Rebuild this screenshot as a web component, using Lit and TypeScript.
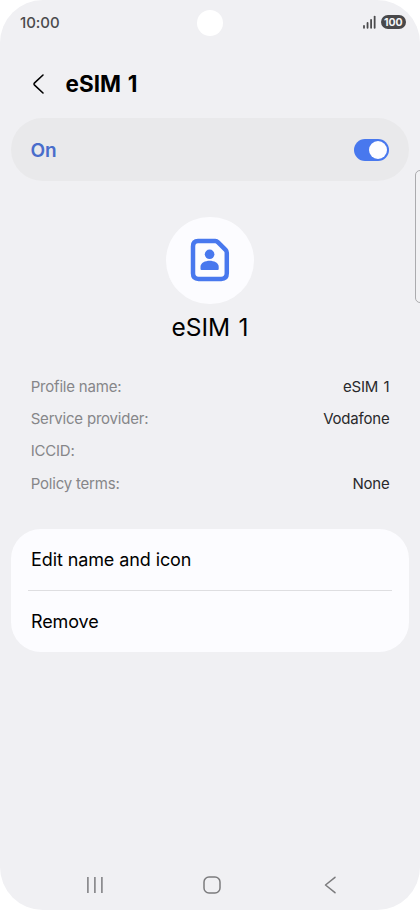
import { LitElement, html, css, svg } from "lit";
import { customElement } from "lit/decorators.js";

interface Detail {
  label: string;
  value: string;
}

const details: Detail[] = [
  { label: "Profile name:", value: "eSIM 1" },
  { label: "Service provider:", value: "Vodafone" },
  { label: "ICCID:", value: "" },
  { label: "Policy terms:", value: "None" },
];

const bars = [3.2, 6.2, 9.4, 12.6];

@customElement("app-root")
export class AppRoot extends LitElement {
  static styles = css`
    :host {
      display: block;
      width: 420px;
      height: 910px;
      background: #fff;
      font-family: Inter, Roboto, sans-serif;
      color: #000;
    }
    * { box-sizing: border-box; }
    svg { display: block; flex: none; }
    .screen {
      position: relative;
      width: 420px;
      height: 910px;
      border-radius: 43px;
      background: #f0f0f3;
      overflow: hidden;
      display: flex;
      flex-direction: column;
      white-space: nowrap;
    }
    .status {
      height: 44px;
      padding: 0 14.5px 0 20px;
      display: flex;
      align-items: center;
      justify-content: space-between;
    }
    .time { font-size: 15px; font-weight: 500; color: #4b4b4d; letter-spacing: -0.05px; }
    .indicators { display: flex; align-items: center; gap: 5px; }
    .battery {
      width: 24.5px;
      height: 14.4px;
      border-radius: 7.2px;
      background: #48484a;
      color: #f4f4f6;
      font-size: 10.5px;
      font-weight: 700;
      line-height: 15.4px;
      text-align: center;
    }
    .camera {
      position: absolute;
      left: 196.5px;
      top: 9.5px;
      width: 26.5px;
      height: 26.5px;
      border-radius: 50%;
      background: #fff;
    }
    .header { height: 74px; padding: 5px 0 0 32px; display: flex; align-items: center; gap: 20.5px; }
    .title { margin: 0; font-size: 22.5px; font-weight: 700; line-height: 30px; word-spacing: 1.5px; }
    .power {
      height: 63.4px;
      margin: 0 11px;
      padding: 0 19.8px 0 19.5px;
      border-radius: 31.7px;
      background: #e9e9eb;
      display: flex;
      align-items: center;
      justify-content: space-between;
    }
    .state { padding-top: 2px; font-size: 19px; font-weight: 580; color: #496dcb; }
    .switch {
      width: 35.2px;
      height: 22.2px;
      padding: 0 2px;
      border-radius: 12px;
      background: #4878ee;
      display: flex;
      align-items: center;
      justify-content: flex-end;
    }
    .knob { width: 18px; height: 18px; border-radius: 50%; background: #fdfdff; }
    .hero { margin-top: 35.2px; display: flex; flex-direction: column; align-items: center; }
    .disc {
      width: 87.3px;
      height: 87.3px;
      border-radius: 50%;
      background: #fcfcff;
      display: flex;
      align-items: center;
      justify-content: center;
    }
    .name { margin-top: 7.2px; font-size: 24.5px; font-weight: 375; line-height: 32px; word-spacing: 1.5px; }
    .details { margin: 27.1px 30.5px 0 30.7px; }
    .row {
      height: 32.3px;
      display: flex;
      align-items: center;
      justify-content: space-between;
      font-size: 15px;
      font-weight: 380;
      letter-spacing: -0.2px;
      color: #29292b;
    }
    .row span:last-child { word-spacing: 1.5px; }
    .label { color: #868689; }
    .menu { margin: 29.4px 11px 0; border-radius: 30px; background: #fcfcff; }
    .item {
      height: 61px;
      padding: 1px 20px 0;
      display: flex;
      align-items: center;
      font-size: 18px;
      font-weight: 380;
      letter-spacing: -0.1px;
    }
    .rule { height: 1px; margin: 0 17px; background: #dedee1; }
    .nav {
      margin-top: auto;
      height: 51px;
      padding: 0 83px 0 86px;
      display: flex;
      align-items: center;
    }
    .home { margin-left: 99px; }
    .back { margin-left: auto; }
    .edge {
      position: absolute;
      left: 415px;
      top: 170px;
      width: 12px;
      height: 133px;
      border: 1px solid #ababae;
      border-radius: 5px;
      background: #f2f2f4;
    }
  `;

  render() {
    return html`
      <div class="screen">
        <div class="status">
          <span class="time">10:00</span>
          <div class="indicators">
            <svg width="13" height="14" viewBox="0 0 13 14" stroke="#4b4b4d" stroke-width="1.8" stroke-linecap="round">
              ${bars.map((h, i) => svg`<path d=${`M${1 + i * 3.55} 12.8V${14.2 - h}`} />`)}
            </svg>
            <div class="battery">100</div>
          </div>
        </div>
        <div class="header">
          <svg width="13" height="22" viewBox="0 0 13 22" fill="none" stroke="#000" stroke-width="1.6" stroke-linecap="round" stroke-linejoin="round">
            <path d="M11 2L2.3 10.2Q1.6 11 2.3 11.8L11 20" />
          </svg>
          <h1 class="title">eSIM 1</h1>
        </div>
        <div class="power">
          <span class="state">On</span>
          <div class="switch"><div class="knob"></div></div>
        </div>
        <div class="hero">
          <div class="disc">
            <svg width="40" height="44" viewBox="0 0 40 44" fill="#4878ee">
              <path d="M8 3.1H25.2Q26.9 3.1 28.1 4.3L35.6 11.8Q36.8 13 36.8 14.7V35.3Q36.8 40.9 31.2 40.9H8.6Q3 40.9 3 35.3V8.4Q3 3.1 8 3.1Z" fill="none" stroke="#4878ee" stroke-width="4.5" stroke-linejoin="round" />
              <circle cx="19.6" cy="16.3" r="4.8" />
              <path d="M10.5 31.1V28.8C10.5 24.8 15.3 22.8 19.6 22.8S28.7 24.8 28.7 28.8V31.1Q28.7 32.1 27.7 32.1H11.5Q10.5 32.1 10.5 31.1Z" />
            </svg>
          </div>
          <div class="name">eSIM 1</div>
        </div>
        <div class="details">
          ${details.map(
            (d) => html`<div class="row"><span class="label">${d.label}</span><span>${d.value}</span></div>`
          )}
        </div>
        <div class="menu">
          <div class="item">Edit name and icon</div>
          <div class="rule"></div>
          <div class="item">Remove</div>
        </div>
        <div class="nav">
          <svg width="18" height="18" viewBox="0 0 18 18" stroke="#7b7b7d" stroke-width="1.5">
            <path d="M1.9 1V17M8.9 1V17M15.9 1V17" />
          </svg>
          <svg class="home" width="18" height="18" viewBox="0 0 18 18" fill="none" stroke="#7b7b7d" stroke-width="1.5">
            <rect x="1" y="1" width="16" height="16" rx="5" />
          </svg>
          <svg class="back" width="13" height="18" viewBox="0 0 13 18" fill="none" stroke="#7b7b7d" stroke-width="1.5" stroke-linecap="round" stroke-linejoin="round">
            <path d="M11 1.3L1.5 9L11 16.7" />
          </svg>
        </div>
        <div class="camera"></div>
        <div class="edge"></div>
      </div>
    `;
  }
}
